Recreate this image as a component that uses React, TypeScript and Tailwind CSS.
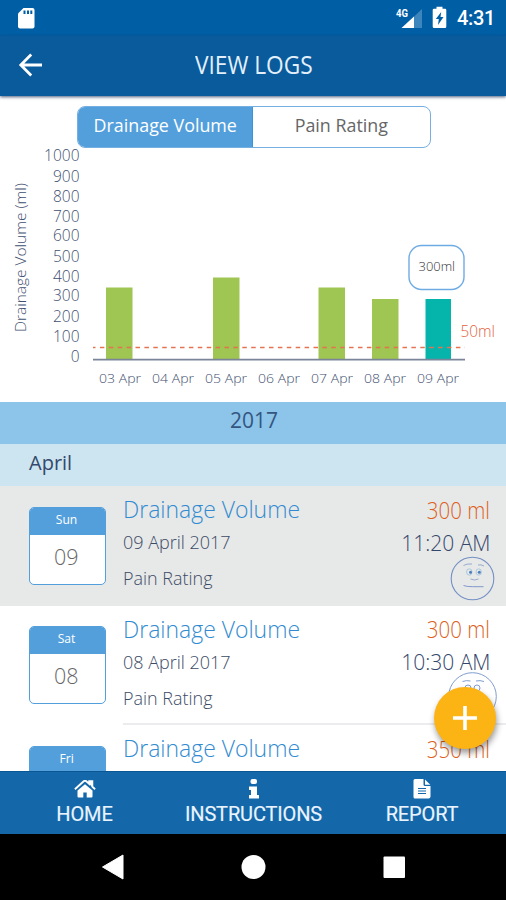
const days = [
  { label: "03 Apr", top: 287.5, x: 106 },
  { label: "04 Apr" },
  { label: "05 Apr", top: 277.5, x: 213 },
  { label: "06 Apr" },
  { label: "07 Apr", top: 287.5, x: 318.5 },
  { label: "08 Apr", top: 299, x: 372 },
  { label: "09 Apr", top: 299, x: 425.5, active: true },
];

const ticks = [
  { value: 1000, y: 160.5 },
  { value: 900, y: 181.5 },
  { value: 800, y: 201.5 },
  { value: 700, y: 221.5 },
  { value: 600, y: 241 },
  { value: 500, y: 262 },
  { value: 400, y: 281.5 },
  { value: 300, y: 301 },
  { value: 200, y: 322 },
  { value: 100, y: 342 },
  { value: 0, y: 362 },
];

function StatusBar() {
  return (
    <div className="flex h-9 items-center bg-[#005ea5] pl-[17px] pr-[11px] text-white">
      <svg width="18" height="21" viewBox="0 0 18 21">
        <path d="M6.5 0H15.5Q17.500 0 17.500 2V18.500Q17.500 20.500 15.500 20.500H3Q1 20.500 1 18.500V5.500Z" fill="#fff" />
        <path d="M6.500 2.500h2v3.500h-2zM10 2.500h2v3.500h-2zM13.300 2.500h2v3.500h-2z" fill="#005ea5" />
      </svg>
      <svg className="ml-auto" width="28" height="22" viewBox="0 0 28 22">
        <path d="M27 2V21H7Z" fill="#3d86bd" />
        <path d="M19 9.500V21H6.500Z" fill="#fff" />
        <path d="M0 0H14V10H0Z" fill="#005ea5" />
        <text x="1" y="9.500" fontFamily="Roboto, sans-serif" fontSize="10" fontWeight="700" fill="#fff" textLength="12" lengthAdjust="spacingAndGlyphs">4G</text>
      </svg>
      <svg className="ml-[9px] -translate-y-[0.5px]" width="15" height="22" viewBox="0 0 15 22">
        <path d="M4.500 0h6v2.200H13Q14.300 2.200 14.300 3.500V20Q14.300 21.500 13 21.500H2Q.7 21.500 .7 20V3.500Q.7 2.200 2 2.200H4.500Z" fill="#fff" />
        <path d="M9.200 5.500 3.800 12.500H6.800L6 18.500L11.500 10.500H8.500Z" fill="#005ea5" />
      </svg>
      <span className="ml-[10px] w-[38px] font-['Roboto',sans-serif] text-[20px] font-medium leading-9 tracking-[-0.3px]">4:31</span>
    </div>
  );
}

function AppBar() {
  return (
    <header className="relative z-10 flex h-[60px] items-center bg-[#095b9b] text-[#e3f0fc] shadow-[0_1px_3px_rgba(30,50,90,0.8)]">
      <svg className="ml-[18px] -translate-y-[1px]" width="26" height="26" viewBox="0 0 26 26" fill="none" stroke="#fff" strokeWidth="2.8">
        <path d="M24 13H3M13.200 2.500 2.800 13 13.200 23.500" />
      </svg>
      <h1 className="ml-[150.5px] font-['Open_Sans',sans-serif] text-[25px] font-normal leading-[56px]">
        <span className="inline-block origin-left scale-x-[0.907] whitespace-nowrap pb-1">VIEW LOGS</span>
      </h1>
    </header>
  );
}

function Chart() {
  return (
    <svg className="block overflow-visible" width="506" height="254" viewBox="0 148 506 254" fontFamily="'Open Sans', sans-serif" fontWeight="300">
      <g fill="#3f4f70" fontSize="15.5">
        {ticks.map((t) => (
          <text key={t.value} x="79.5" y={t.y} textAnchor="end">{t.value}</text>
        ))}
        <text transform="translate(25.5 332) rotate(-90)" fontSize="15" textLength="149" lengthAdjust="spacingAndGlyphs">Drainage Volume (ml)</text>
      </g>
      <g fill="#3f4f70" fontSize="13.5">
        {days.map((d, i) => (
          <text key={d.label} x={99 + i * 53} y="383" textLength="42" lengthAdjust="spacingAndGlyphs">{d.label}</text>
        ))}
      </g>
      {days.map((d) =>
        d.top ? <rect key={d.label} x={d.x} y={d.top} width={d.active ? 25.5 : 26.5} height={359 - d.top} fill={d.active ? "#05b5ac" : "#9fc552"} /> : null
      )}
      <path d="M93 359.7H465" stroke="#7b8599" strokeWidth="1.8" />
      <path d="M93 347.5H465" stroke="#e5734f" strokeWidth="1.6" strokeDasharray="4.5 4.4" strokeDashoffset="2" />
      <rect x="409" y="245.5" width="55" height="44" rx="12.5" fill="#fff" stroke="#6fabe3" strokeWidth="1.4" />
      <text x="418.5" y="270.5" fontSize="13" fill="#333" textLength="36.5" lengthAdjust="spacingAndGlyphs">300ml</text>
      <text x="460.5" y="336.5" fontSize="16.5" fill="#e2623c" textLength="34.5" lengthAdjust="spacingAndGlyphs">50ml</text>
    </svg>
  );
}

function Face({ happy }: { happy?: boolean }) {
  return happy ? (
    <svg className="absolute right-[9px] top-[66px]" width="49" height="49" viewBox="0 0 49 49" fill="none" stroke="#7f9dce" strokeWidth="1">
      <circle cx="24.500" cy="24.500" r="23.800" />
      <path d="M14.500 9.500q4-1.500 8-.5M28 9q4-1 8 .5" />
      <circle cx="20" cy="16" r="3" />
      <circle cx="29" cy="16" r="3" />
      <path d="M14 30q10 7 20 0" />
    </svg>
  ) : (
    <svg className="absolute right-[11px] top-[69.500px]" width="45" height="45" viewBox="0 0 45 45" fill="none" stroke="#7590c4" strokeWidth="1">
      <circle cx="22.500" cy="22.500" r="21.300" strokeWidth="1.100" />
      <path d="M13.500 9.500q3-2 8.500-1.500M28 9q3-.8 6 1" strokeWidth=".7" />
      <ellipse cx="19.300" cy="16" rx="2.700" ry="3.200" stroke="#9dbfe0" strokeWidth=".8" />
      <ellipse cx="28.700" cy="16" rx="2.700" ry="3.200" stroke="#9dbfe0" strokeWidth=".8" />
      <circle cx="20.500" cy="16.300" r="1.500" fill="#4a80ba" stroke="none" />
      <circle cx="29.300" cy="16.300" r="1.500" fill="#4a80ba" stroke="none" />
      <path d="M20.500 23q4 2 8 0" strokeWidth=".7" />
      <path d="M13.500 29.500q3 1.200 9 1.200H33.500" strokeWidth=".9" />
    </svg>
  );
}

type LogProps = { day: string; date?: string; amount: string; time?: string; selected?: boolean };

function LogRow({ day, date, amount, time, selected }: LogProps) {
  return (
    <div className={`relative flex h-[119.5px] shrink-0 pl-[28.5px] ${selected ? "bg-[#e7e8e8]" : "bg-white"}`}>
      <div className="mt-[20.5px] h-[78px] w-[77.5px] overflow-hidden rounded-[5px] border-[1.5px] border-[#539fdc] bg-white text-center">
        <div className="h-[27px] bg-[#539fdc] text-[13px] leading-[23px] text-white">
          <span className="inline-block -translate-x-[1px] scale-x-[0.93]">{day}</span>
        </div>
        {date && <div className="-ml-[2px] text-[21.5px] font-light leading-[44px] text-[#666]">{date}</div>}
      </div>
      <div className={`ml-[17px] flex flex-1 justify-between whitespace-nowrap pr-4 font-light ${selected ? "" : "border-b-2 border-[#ececee]"}`}>
        <div>
          <div className="mt-[7px] h-8 text-[24.5px] leading-8 text-[#318bd1]">
            <span className="inline-block origin-left scale-x-[0.937]">Drainage Volume</span>
          </div>
          {date && (
            <>
              <div className="h-8 pt-[1px] text-[19px] leading-8 text-[#3c4b66]">
                <span className="inline-block origin-left scale-x-[0.947]">{date} April 2017</span>
              </div>
              <div className="mt-[5px] h-8 text-[18.5px] leading-8 text-[#3c4b66]">
                <span className="inline-block origin-left scale-x-[0.97]">Pain Rating</span>
              </div>
            </>
          )}
        </div>
        <div className="text-right">
          <div className="mt-[7.5px] h-8 text-[23px] leading-8 text-[#dd5f20]">
            <span className="inline-block origin-right scale-x-[0.89]">{amount}</span>
          </div>
          {time && (
            <div className="h-8 text-[22px] leading-8 text-[#34476b]">
              <span className="inline-block origin-right scale-x-[0.955]">{time}</span>
            </div>
          )}
        </div>
      </div>
      {date && <Face happy={!selected} />}
    </div>
  );
}

function BottomNav() {
  return (
    <nav className="relative flex h-[63px] border-t border-[#0a5796] bg-[#1468aa] font-['Roboto',sans-serif] text-[20px] leading-6 text-[#eaf4ff]">
      <div className="flex w-[169px] flex-col items-center pt-[8px]">
        <svg width="22" height="18" viewBox="0 0 22 18" fill="#fff">
          <path d="M11 4.200 3.500 10.500V16.500Q3.500 17.500 4.500 17.500H9.300V12.500H12.700V17.500H17.500Q18.500 17.500 18.500 16.500V10.500Z" />
          <path d="M.9 9.200 9.700 1.300Q11 .2 12.300 1.300L15.200 3.900V1.200H18.300V6.600L21.100 9.200" fill="none" stroke="#fff" strokeWidth="1.900" />
          <path d="M15 1H18.500V7L15 4Z" />
        </svg>
        <span className="mt-[4px] tracking-[-0.1px] [-webkit-text-stroke:0.15px]">HOME</span>
      </div>
      <div className="flex w-[169px] flex-col items-center pt-[7px]">
        <svg width="12" height="20" viewBox="0 0 12 20" fill="#fff">
          <rect x="2.500" y="0" width="6.500" height="5" rx="2" />
          <path d="M1 7.500H9V16H10.500Q11 16 11 16.500V19Q11 19.500 10.500 19.500H1.500Q1 19.500 1 19V16.500Q1 16 1.500 16H3V11H1.500Q1 11 1 10.500Z" />
        </svg>
        <span className="mt-[3px] tracking-[-0.15px] [-webkit-text-stroke:0.15px]">INSTRUCTIONS</span>
      </div>
      <div className="flex w-[168px] flex-col items-center pt-[7px]">
        <svg width="18" height="20" viewBox="0 0 18 20">
          <path d="M2 0H10.500V5.500Q10.500 7 12 7H17.500V17.500Q17.500 19.500 15.500 19.500H2Q.5 19.500 .5 18V1.500Q.5 0 2 0Z" fill="#fff" />
          <path d="M12 .5 17.300 5.800H12Z" fill="#fff" />
          <path d="M5 9.500h8M5 12h8M5 14.500h8" stroke="#1468aa" strokeWidth="1" />
        </svg>
        <span className="mt-[3px] tracking-[-0.15px] [-webkit-text-stroke:0.15px]">REPORT</span>
      </div>
    </nav>
  );
}

export default function App() {
  return (
    <div className="relative flex h-[900px] w-[506px] flex-col overflow-hidden bg-white font-['Open_Sans',sans-serif]">
      <StatusBar />
      <AppBar />
      <div className="ml-[76.5px] mt-[10px] flex h-[42px] w-[354.5px] overflow-hidden rounded-[8px] border-[1.5px] border-[#76b0e3] text-[18.5px] leading-[35px]">
        <div className="w-[175.5px] border-r border-[#3c93d8] bg-[#539fdc] text-center text-white">
          <span className="inline-block scale-x-[0.965]">Drainage Volume</span>
        </div>
        <div className="flex-1 text-center text-[#666]">
          <span className="inline-block scale-x-[0.965]">Pain Rating</span>
        </div>
      </div>
      <Chart />
      <div className="h-[41.5px] shrink-0 bg-[#8cc4ea] text-center text-[21px] leading-[36px] text-[#34567f]">
        <span className="inline-block translate-x-[1px]">2017</span>
      </div>
      <div className="h-[42.5px] shrink-0 bg-[#cde5f1] pl-[29px] text-[20px] leading-[37px] text-[#34496b]">April</div>
      <main className="h-[285px] shrink-0 overflow-hidden">
        <LogRow day="Sun" date="09" amount="300 ml" time="11:20 AM" selected />
        <LogRow day="Sat" date="08" amount="300 ml" time="10:30 AM" />
        <LogRow day="Fri" amount="350 ml" />
      </main>
      <BottomNav />
      <div className="flex flex-1 bg-black">
        <svg width="506" height="66" viewBox="0 0 506 66" fill="#fff">
          <path d="M102.500 33 123 21V45Z" stroke="#fff" strokeLinejoin="round" />
          <circle cx="253.500" cy="33" r="12" />
          <rect x="383.500" y="22.500" width="21.500" height="21.500" rx="1" />
        </svg>
      </div>
      <button className="absolute left-[433.5px] top-[686.5px] flex h-[62px] w-[62px] items-center justify-center rounded-full bg-[#fcb414] shadow-[1px_4px_6px_rgba(0,0,0,0.4)]">
        <svg width="24" height="24" viewBox="0 0 24 24" stroke="#fff" strokeWidth="3.6">
          <path d="M12 0V24M0 12H24" />
        </svg>
      </button>
    </div>
  );
}
